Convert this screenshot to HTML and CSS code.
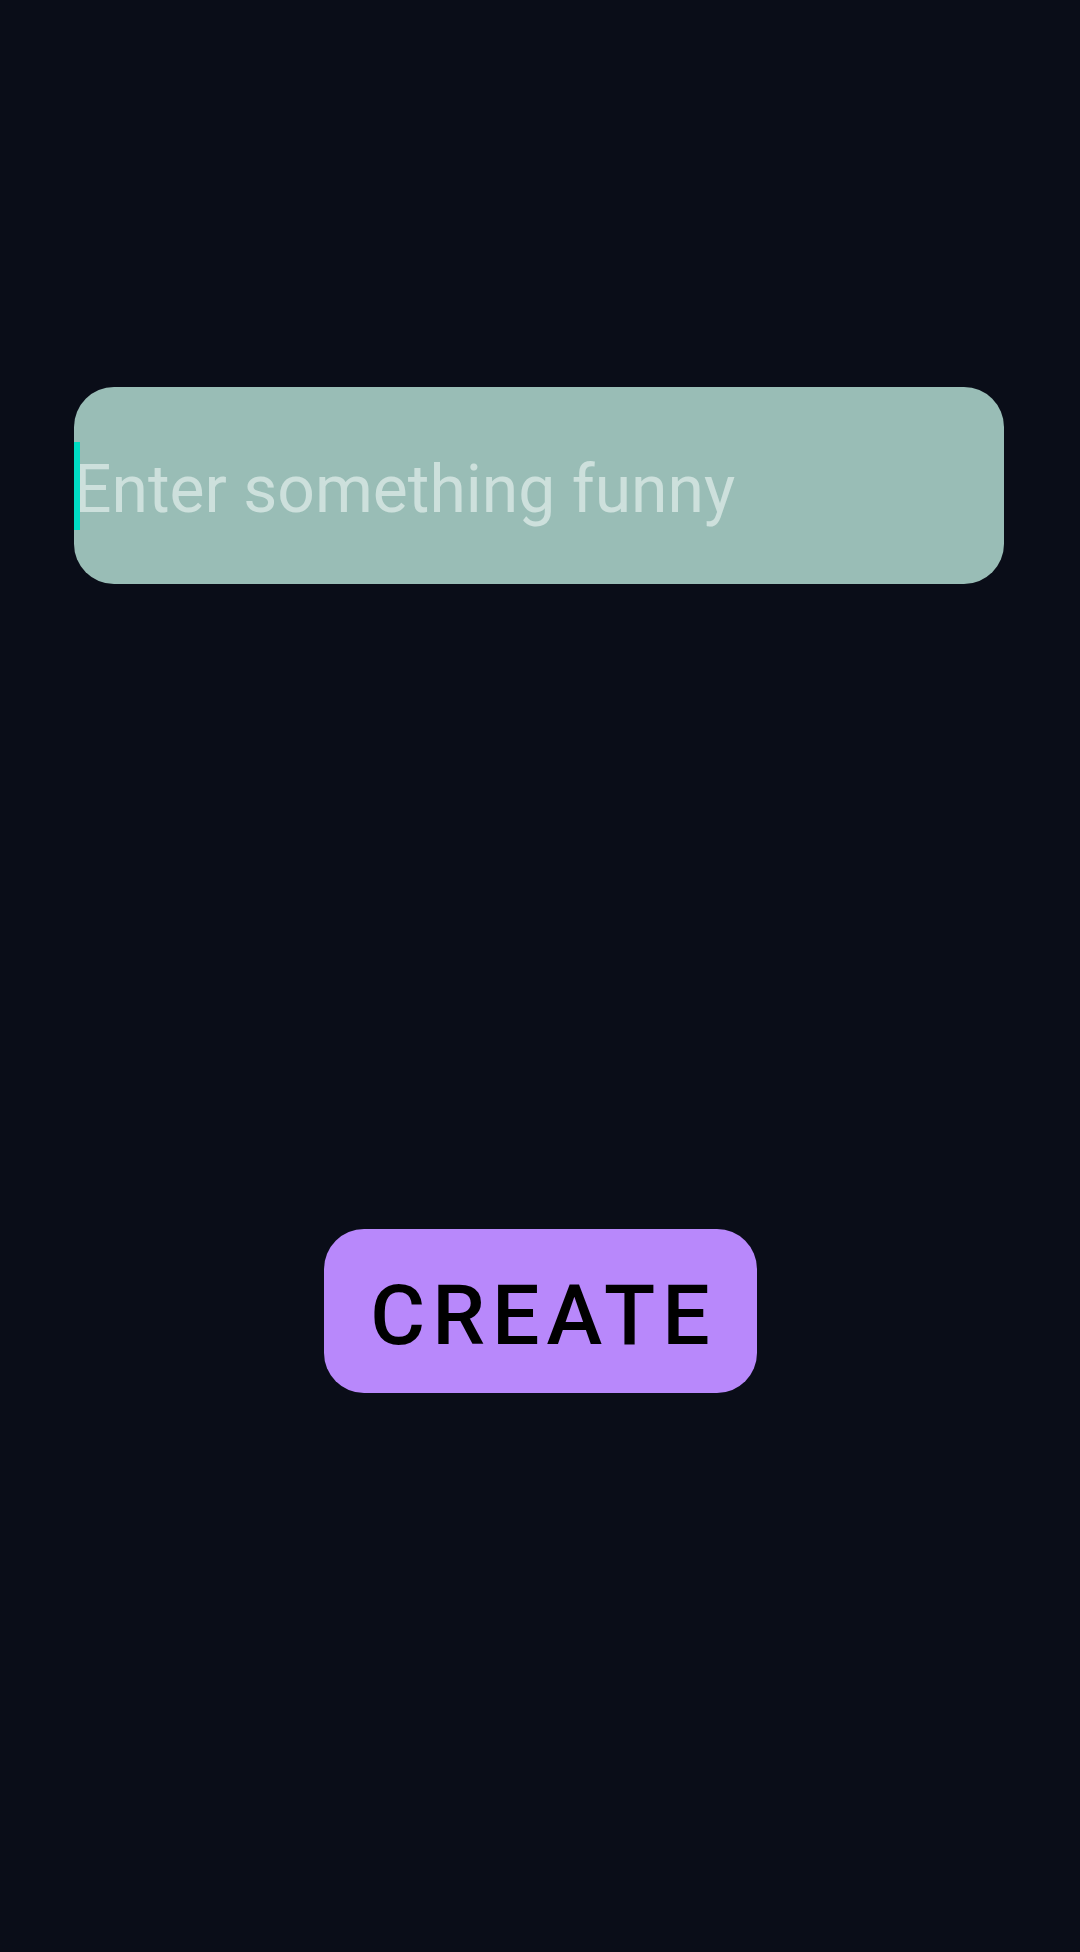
FILE: index.html
```html
<!DOCTYPE html>
<html lang="en">
<head>
<meta charset="utf-8">
<title>Create</title>
<link rel="stylesheet" href="styles.css">
</head>
<body>
<main class="screen">
  <div class="field">
    <span class="caret"></span>
    <span class="placeholder">Enter something funny</span>
  </div>
  <div class="actions">
    <button class="create-btn" type="button">CREATE</button>
  </div>
</main>
</body>
</html>
```
FILE: styles.css
```css
html, body {
  margin: 0;
  padding: 0;
  background: #0a0d18;
}
body {
  width: 1080px;
  height: 1952px;
  font-family: Roboto, "Noto Sans", sans-serif;
}
.screen {
  display: flex;
  flex-direction: column;
  padding-top: 387px;
}
.field {
  margin: 0 76px 0 74px;
  height: 197px;
  border-radius: 40px;
  background: #99bdb6;
  display: flex;
  align-items: center;
  position: relative;
}
.caret {
  position: absolute;
  left: 0;
  top: 55px;
  width: 6px;
  height: 88px;
  background: #00dcc4;
}
.placeholder {
  margin-left: 0;
  margin-top: 8px;
  font-size: 66px;
  line-height: 1;
  color: #cde0dc;
  font-weight: 400;
}
.actions {
  display: flex;
  justify-content: center;
  margin-top: 645px;
}
.create-btn {
  width: 433px;
  height: 164px;
  border: none;
  border-radius: 40px;
  background: #b888fb;
  color: #000;
  font-family: Roboto, "Noto Sans", sans-serif;
  font-weight: 500;
  font-size: 84px;
  letter-spacing: 7px;
  padding: 8px 0 0 7px;
  display: flex;
  align-items: center;
  justify-content: center;
}
```
